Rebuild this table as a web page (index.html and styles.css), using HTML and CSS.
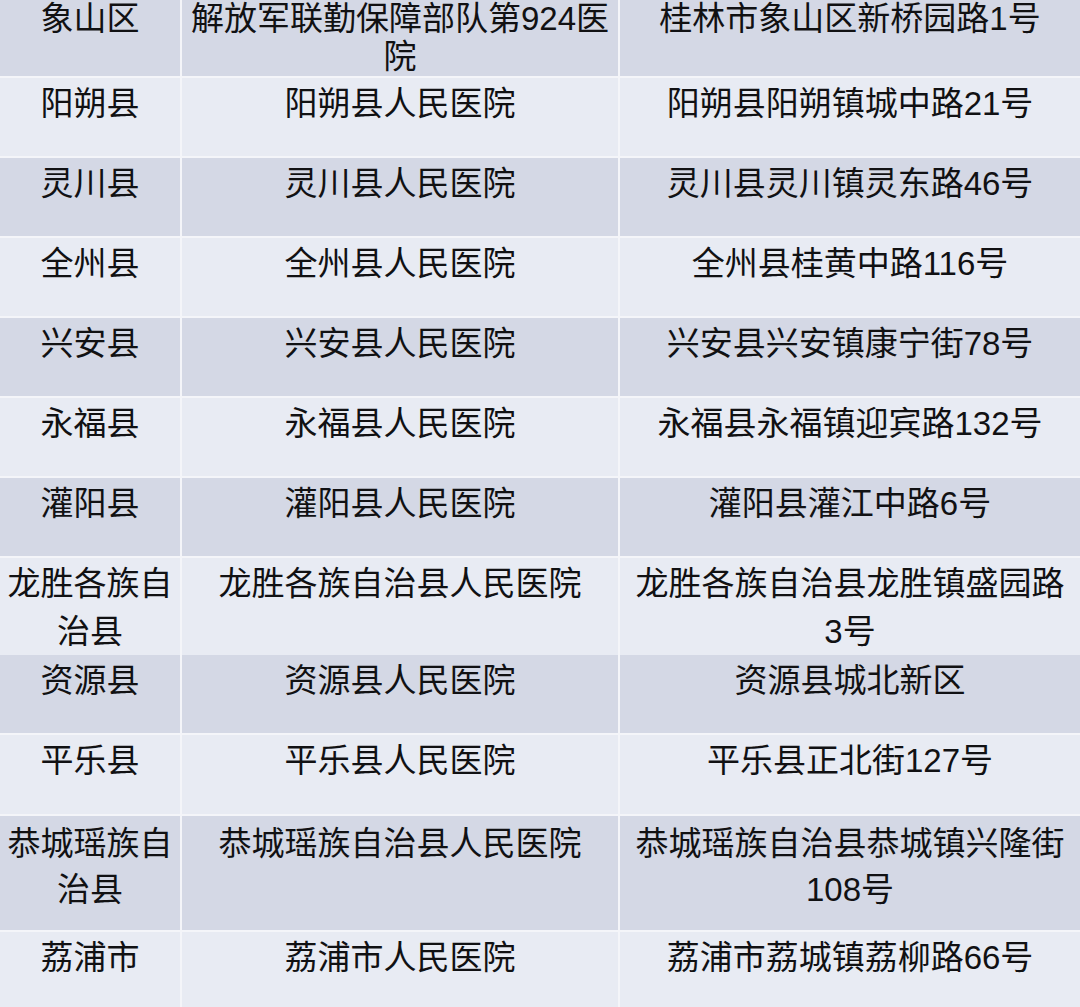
FILE: index.html
```html
<!DOCTYPE html>
<html lang="zh-CN">
<head>
<meta charset="utf-8">
<title>医院名单</title>
<link rel="stylesheet" href="styles.css">
</head>
<body>
<div class="table">
  <div class="row dark r-first">
    <div class="cell">象山区</div>
    <div class="cell">解放军联勤保障部队第924医院</div>
    <div class="cell">桂林市象山区新桥园路1号</div>
  </div>
  <div class="row light">
    <div class="cell">阳朔县</div>
    <div class="cell">阳朔县人民医院</div>
    <div class="cell">阳朔县阳朔镇城中路21号</div>
  </div>
  <div class="row dark">
    <div class="cell">灵川县</div>
    <div class="cell">灵川县人民医院</div>
    <div class="cell">灵川县灵川镇灵东路46号</div>
  </div>
  <div class="row light">
    <div class="cell">全州县</div>
    <div class="cell">全州县人民医院</div>
    <div class="cell">全州县桂黄中路116号</div>
  </div>
  <div class="row dark">
    <div class="cell">兴安县</div>
    <div class="cell">兴安县人民医院</div>
    <div class="cell">兴安县兴安镇康宁街78号</div>
  </div>
  <div class="row light">
    <div class="cell">永福县</div>
    <div class="cell">永福县人民医院</div>
    <div class="cell">永福县永福镇迎宾路132号</div>
  </div>
  <div class="row dark">
    <div class="cell">灌阳县</div>
    <div class="cell">灌阳县人民医院</div>
    <div class="cell">灌阳县灌江中路6号</div>
  </div>
  <div class="row light r-two">
    <div class="cell">龙胜各族自治县</div>
    <div class="cell">龙胜各族自治县人民医院</div>
    <div class="cell">龙胜各族自治县龙胜镇盛园路<span class="nw">3号</span></div>
  </div>
  <div class="row dark">
    <div class="cell">资源县</div>
    <div class="cell">资源县人民医院</div>
    <div class="cell">资源县城北新区</div>
  </div>
  <div class="row light r-79">
    <div class="cell">平乐县</div>
    <div class="cell">平乐县人民医院</div>
    <div class="cell">平乐县正北街127号</div>
  </div>
  <div class="row dark r-tall">
    <div class="cell">恭城瑶族自治县</div>
    <div class="cell">恭城瑶族自治县人民医院</div>
    <div class="cell">恭城瑶族自治县恭城镇兴隆街<span class="nw">108号</span></div>
  </div>
  <div class="row light r-last">
    <div class="cell">荔浦市</div>
    <div class="cell">荔浦市人民医院</div>
    <div class="cell">荔浦市荔城镇荔柳路66号</div>
  </div>
</div>
</body>
</html>
```
FILE: styles.css
```css
html, body {
  margin: 0;
  padding: 0;
  background: #f4f5f9;
  overflow: hidden;
}

.table {
  width: 1080px;
  display: flex;
  flex-direction: column;
  gap: 2px;
  background: #f4f5f9;
  font-family: "Liberation Sans", "Noto Sans CJK SC", sans-serif;
  font-size: 33px;
  font-weight: 400;
  color: #111113;
}

.row {
  display: grid;
  grid-template-columns: 180px 436px 460px;
  column-gap: 2px;
  height: 78px;
}

.cell {
  text-align: center;
  line-height: 48px;
  padding-top: 2px;
  overflow: visible;
}

.dark .cell {
  background: #d4d8e5;
}

.light .cell {
  background: #e8ebf3;
}

.r-first {
  height: 76px;
}

.r-first .cell {
  line-height: 38px;
  padding-top: 0;
}

.r-two {
  height: 95px;
}

.r-79 {
  height: 79px;
}

.r-tall {
  height: 114px;
}

.r-tall .cell {
  line-height: 46px;
  padding-top: 5px;
}

.r-last {
  height: 80px;
}

.nw {
  white-space: nowrap;
}
```
